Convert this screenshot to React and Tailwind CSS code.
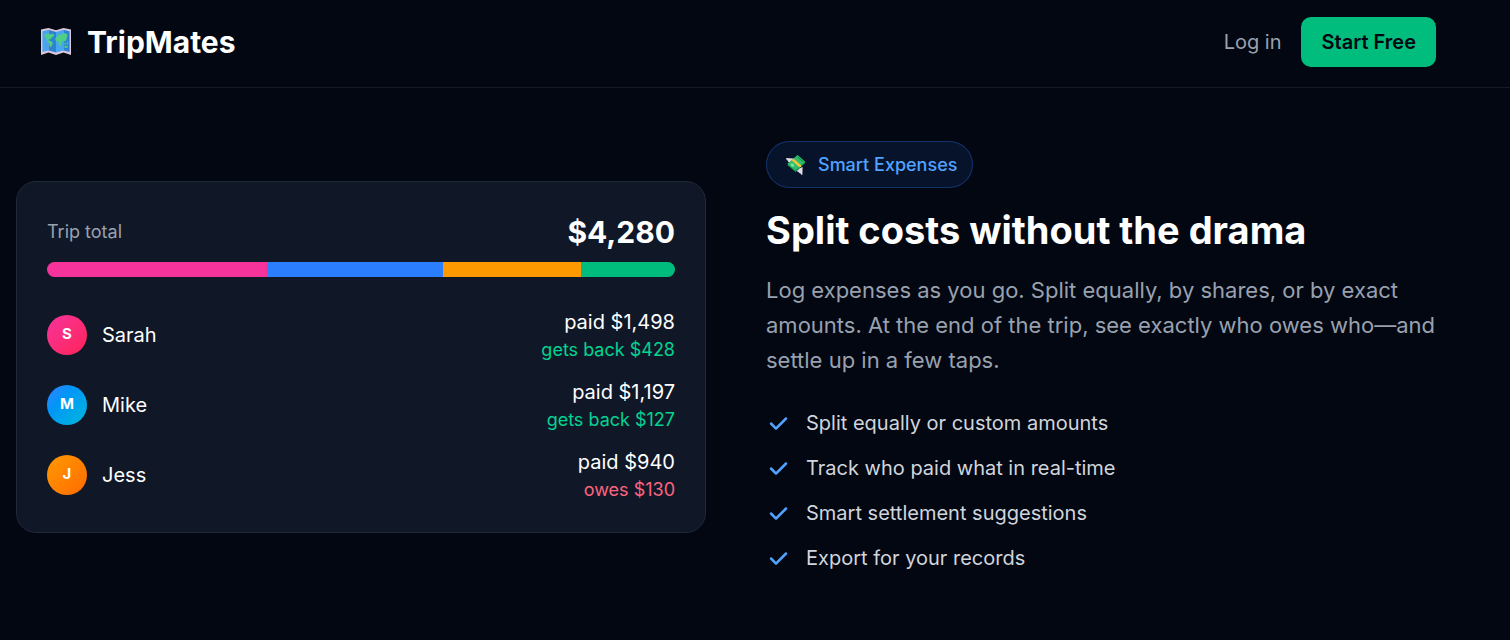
const shares = [
  { id: 'sarah', percent: 35, color: 'bg-pink-500' },
  { id: 'mike', percent: 28, color: 'bg-blue-500' },
  { id: 'jess', percent: 22, color: 'bg-amber-500' },
  { id: 'other', percent: 15, color: 'bg-emerald-500' },
]

const members = [
  { name: 'Sarah', avatar: 'from-pink-500 to-rose-500', paid: '$1,498', balance: 'gets back $428', tone: 'text-emerald-400' },
  { name: 'Mike', avatar: 'from-blue-500 to-cyan-500', paid: '$1,197', balance: 'gets back $127', tone: 'text-emerald-400' },
  { name: 'Jess', avatar: 'from-amber-500 to-orange-500', paid: '$940', balance: 'owes $130', tone: 'text-rose-400' },
]

const features = [
  'Split equally or custom amounts',
  'Track who paid what in real-time',
  'Smart settlement suggestions',
  'Export for your records',
]

function MapIcon() {
  return (
    <svg viewBox="0 0 30 28" className="h-7 w-[30px]" aria-hidden="true">
      <path d="M0 1.6 7.5 0 15 2.2 22.5 0 30 1.6V27L22.5 24.6 15 27 7.5 24.6 0 27Z" fill="#dcc8dc" />
      <path d="M1.4 3.2 7.5 1.8V22.4L1.4 24Z" fill="#4aa5f0" />
      <path d="M7.5 1.8 15 4V24.6L7.5 22.4Z" fill="#2d83d3" />
      <path d="M15 4 22.5 1.8V22.4L15 24.6Z" fill="#4aa5f0" />
      <path d="M22.5 1.8 28.6 3.2V24L22.5 22.4Z" fill="#2d83d3" />
      <path
        d="M3 7.4 5 6 8 5.4 9.5 6.4 11 5.6 13.2 6.8 12.4 8.8 10.6 9.4 9.4 11.4 8 11 7.6 12.6 10.4 13.2 12 15 10.8 17.6 9.6 19.4 8.6 17.8 8.2 15.4 6 12.6 4.8 9.6Z"
        fill="#4fcf86"
      />
      <path
        d="M15.6 9 17.6 6.6 20 6.8 22.4 5 25.4 5.8 26.6 7.2 25.8 9.4 25.2 12 23.8 13.4 22.4 12.4 21 14.2 20.2 17.2 18.8 18.4 17.8 16 17.4 13.6 14.8 13 14.2 10.6Z"
        fill="#4fcf86"
      />
      <path d="M23.4 14.8h1.4v1.6h-1.4zM25.8 13.8h1v3h-1zM23.2 18l3-.6 1 2.2-3.4.4z" fill="#4fcf86" />
    </svg>
  )
}

function MoneyIcon() {
  return (
    <svg viewBox="0 0 20 20" className="size-5" aria-hidden="true">
      <path d="M0 3 7.6 3.4 6.4 6.4 4.4 8.6 3 7.2 2.2 6.8 1.6 5.4 .6 4.8Z" fill="#dedbe3" />
      <path d="M16.6 12 16.4 20 15 19.4 14.6 18.4 13.2 18 12.6 17 10.6 16.2 13 13.4Z" fill="#dedbe3" />
      <path d="M1.2 10 11.6 .6 19.4 7.8 9.6 17Z" fill="#13964f" />
      <path d="M1.4 8.8 11.6 0 19.2 6.8 9.4 15.6Z" fill="#2dbd6a" />
      <path d="M5.6 5.2 7.4 3.6 15.2 10.4 15 12 13.4 12.2Z" fill="#f7c33b" />
      <ellipse cx="6.4" cy="10" rx="2" ry="1.5" fill="#7be0a0" transform="rotate(40 6.4 10)" />
      <path d="M11.6 1.8 16.9 6.7" stroke="#128a49" fill="none" />
    </svg>
  )
}

function CheckIcon() {
  return (
    <svg viewBox="0 0 20 20" className="size-[25px] text-blue-400" fill="currentColor" aria-hidden="true">
      <path
        fillRule="evenodd"
        clipRule="evenodd"
        d="M16.707 5.293a1 1 0 010 1.414l-8 8a1 1 0 01-1.414 0l-4-4a1 1 0 011.414-1.414L8 12.586l7.293-7.293a1 1 0 011.414 0z"
      />
    </svg>
  )
}

function Header() {
  return (
    <header className="flex items-center justify-between border-b border-white/8 pt-[17px] pb-5 pl-[41px] pr-[74px]">
      <a href="#home" className="flex items-center gap-4">
        <MapIcon />
        <span className="text-[30px] leading-9 font-bold">TripMates</span>
      </a>
      <nav className="flex items-center gap-5">
        <a href="#login" className="text-xl text-gray-400">Log in</a>
        <button className="rounded-[10px] bg-emerald-500 px-5 py-[10px] text-xl leading-[30px] font-semibold text-gray-950">
          Start Free
        </button>
      </nav>
    </header>
  )
}

function ExpenseCard() {
  return (
    <div className="rounded-[20px] border border-gray-800 bg-gray-900 p-[30px]">
      <div className="mb-[10px] flex items-center justify-between">
        <span className="text-lg text-gray-400">Trip total</span>
        <span className="text-[30px] leading-10 font-bold">$4,280</span>
      </div>
      <div className="mb-[30px] flex h-[15px] overflow-hidden rounded-full">
        {shares.map((share) => (
          <div key={share.id} className={share.color} style={{ width: share.percent + '%' }} />
        ))}
      </div>
      <ul className="flex flex-col gap-[15px]">
        {members.map((member) => (
          <li key={member.name} className="flex items-center justify-between">
            <div className="flex items-center gap-[15px]">
              <span
                className={
                  'flex size-10 items-center justify-center rounded-full bg-linear-to-br text-[15px] font-bold ' +
                  member.avatar
                }
              >
                {member.name[0]}
              </span>
              <span className="text-xl">{member.name}</span>
            </div>
            <div className="text-right">
              <p className="text-xl leading-[30px]">paid {member.paid}</p>
              <p className={'text-lg leading-[25px] ' + member.tone}>{member.balance}</p>
            </div>
          </li>
        ))}
      </ul>
    </div>
  )
}

function ExpenseCopy() {
  return (
    <div>
      <span className="mb-5 inline-flex items-center gap-3 rounded-full border border-blue-500/30 bg-blue-500/10 py-[10px] pr-[15px] pl-[19px] text-lg leading-[25px] font-medium text-blue-400">
        <MoneyIcon />
        Smart Expenses
      </span>
      <h2 className="mb-5 text-[38px] leading-[45px] font-bold">Split costs without the drama</h2>
      <p className="mb-[30px] text-[22px] leading-[35px] text-gray-400">
        Log expenses as you go. Split equally, by shares, or by exact amounts. At the end of the trip, see
        exactly who owes who—and settle up in a few taps.
      </p>
      <ul className="flex flex-col gap-[15px]">
        {features.map((feature) => (
          <li key={feature} className="flex items-center gap-[15px] text-xl leading-[30px] text-gray-300">
            <CheckIcon />
            {feature}
          </li>
        ))}
      </ul>
    </div>
  )
}

export default function App() {
  return (
    <div className="min-h-screen bg-gray-950 font-['Inter',sans-serif] text-white">
      <Header />
      <main className="grid grid-cols-2 items-center gap-[60px] pt-[53px] pb-[60px] pl-4 pr-[54px]">
        <ExpenseCard />
        <ExpenseCopy />
      </main>
    </div>
  )
}
